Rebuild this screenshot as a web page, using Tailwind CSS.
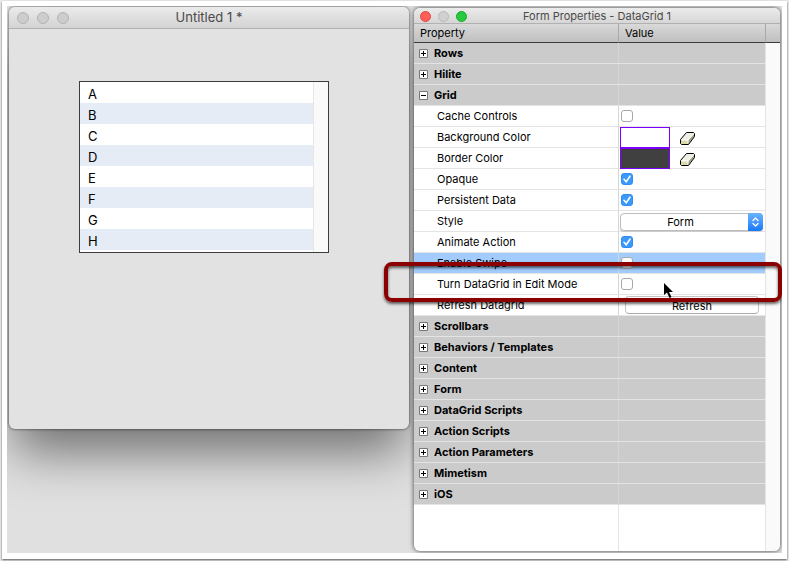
<!DOCTYPE html>
<html lang="en">
<head>
    <meta charset="utf-8">
    <title>Form Properties - DataGrid 1</title>
    <script src="https://cdn.jsdelivr.net/npm/@tailwindcss/browser@4"></script>
</head>
<body class="bg-[#ececec] px-0.5 pt-px pb-0.5 font-['Inter','Liberation_Sans',sans-serif] text-black">
    <div class="bg-white p-[5px] pb-1.5 shadow-[0_1px_2px_#555]">
        <div class="grid grid-cols-[400fr_366fr] items-start gap-[5px] overflow-hidden bg-[#e0e0e0] px-0.5 pt-px pb-0.5">

            <!-- form window -->
            <section class="rounded-md bg-[#e2e2e2] shadow-[0_28px_50px_-5px_rgba(0,0,0,0.5),0_0_3px_rgba(0,0,0,0.7)]">
                <header class="grid h-[22px] grid-cols-[1fr_auto_1fr] items-center rounded-t-md border-b border-[#b1b1b1] bg-linear-to-b from-[#ebebeb] to-[#d3d3d3] px-2">
                    <div class="flex gap-2">
                        <button aria-label="Close" class="size-3 rounded-full border border-[#b3b3b3] bg-[#cdcdcd]"></button>
                        <button aria-label="Minimize" class="size-3 rounded-full border border-[#b3b3b3] bg-[#cdcdcd]"></button>
                        <button aria-label="Zoom" class="size-3 rounded-full border border-[#b3b3b3] bg-[#cdcdcd]"></button>
                    </div>
                    <h1 class="text-[13px] text-[#4a4a4a]">Untitled 1 *</h1>
                </header>
                <div class="pt-[52px] pr-20 pb-44 pl-[70px]">
                    <div class="flex border border-[#3c3c3c] bg-white">
                        <ul class="flex-1 pb-0.5 text-[13px] leading-[21px] [&>li]:h-[21px] [&>li]:px-2 [&>li]:pt-0.5 [&>li:nth-child(even)]:bg-[#e5ecf6]">
                            <li>A</li>
                            <li>B</li>
                            <li>C</li>
                            <li>D</li>
                            <li>E</li>
                            <li>F</li>
                            <li>G</li>
                            <li>H</li>
                        </ul>
                        <div class="w-[15px] border-l border-[#e6e6e6] bg-[#fafafa]"></div>
                    </div>
                </div>
            </section>

            <!-- property inspector -->
            <section class="mt-px rounded-md bg-white shadow-[0_0_5px_rgba(0,0,0,0.7)]">
                <header class="grid h-4 grid-cols-[1fr_auto_1fr] items-center rounded-t-md border-b border-[#b1b1b1] bg-linear-to-b from-[#ebebeb] to-[#d6d6d6] px-1.5">
                    <div class="flex gap-[7px]">
                        <button aria-label="Close" class="size-[11px] rounded-full border border-[#e2463f] bg-[#ff5f57]"></button>
                        <button aria-label="Minimize" class="size-[11px] rounded-full border border-[#b9b9b9] bg-[#d0d0d0]"></button>
                        <button aria-label="Zoom" class="size-[11px] rounded-full border border-[#12ac28] bg-[#28c940]"></button>
                    </div>
                    <h2 class="text-[11px] text-[#4a4a4a]">Form Properties - DataGrid 1</h2>
                </header>
                <table class="w-full table-fixed border-separate border-spacing-0 text-left text-[11px] leading-5 [&_tbody_td]:border-r [&_tbody_td]:border-b [&_tbody_td]:border-[#e4e4e4] [&_tbody_td]:p-0 [&_tbody_th]:border-r [&_tbody_th]:border-b [&_tbody_th]:border-[#e4e4e4] [&_tbody_th]:border-r-[#d6d6d6] [&_tbody_th]:p-0 [&_tbody_th]:font-normal">
                    <colgroup>
                        <col class="w-[56%]">
                        <col>
                        <col class="w-3.5">
                    </colgroup>
                    <thead>
                        <tr class="bg-linear-to-b from-[#d9d9d9] to-[#bebebe] leading-[18px]">
                            <th scope="col" class="border-r border-b border-r-[#a8a8a8] border-b-[#3c3c3c] p-0 pl-1.5 font-normal">Property</th>
                            <th scope="col" class="border-r border-b border-r-[#a8a8a8] border-b-[#3c3c3c] p-0 pl-1.5 font-normal">Value</th>
                            <td class="border-b border-[#3c3c3c] p-0"></td>
                        </tr>
                    </thead>
                    <tbody>
                        <tr class="bg-[#cbcbcb]">
                            <th scope="row"><button class="flex h-5 items-center gap-1.5 pl-[5px] font-bold"><svg class="size-[9px]" viewBox="0 0 9 9"><path d="M.5 .5h8v8h-8z" fill="#fff" stroke="#777"/><path d="M2 4.500h5M4.500 2v5" stroke="#000"/></svg>Rows</button></th>
                            <td></td>
                            <td rowspan="23" class="rounded-br-md border-0! bg-[#fafafa]"></td>
                        </tr>
                        <tr class="bg-[#cbcbcb]">
                            <th scope="row"><button class="flex h-5 items-center gap-1.5 pl-[5px] font-bold"><svg class="size-[9px]" viewBox="0 0 9 9"><path d="M.5 .5h8v8h-8z" fill="#fff" stroke="#777"/><path d="M2 4.500h5M4.500 2v5" stroke="#000"/></svg>Hilite</button></th>
                            <td></td>
                        </tr>
                        <tr class="bg-[#cbcbcb]">
                            <th scope="row"><button class="flex h-5 items-center gap-1.5 pl-[5px] font-bold"><svg class="size-[9px]" viewBox="0 0 9 9"><path d="M.5 .5h8v8h-8z" fill="#fff" stroke="#777"/><path d="M2 4.500h5" stroke="#000"/></svg>Grid</button></th>
                            <td></td>
                        </tr>
                        <tr>
                            <th scope="row"><label for="cache" class="block pl-[23px]">Cache Controls</label></th>
                            <td><div class="flex h-5 items-center pl-0.5"><input id="cache" type="checkbox" class="size-3 appearance-none rounded-[3px] border border-[#a9a9a9] bg-white"></div></td>
                        </tr>
                        <tr>
                            <th scope="row"><label for="bgcolor" class="block pl-[23px]">Background Color</label></th>
                            <td>
                                <div class="flex h-5 items-start gap-[9px] pl-px">
                                    <input id="bgcolor" type="color" value="#ffffff" class="h-[21px] w-[50px] appearance-none border border-[#7d00ff] [&::-webkit-color-swatch]:border-0 [&::-webkit-color-swatch-wrapper]:p-0">
                                    <button aria-label="Clear background color" class="mt-1">
                                        <svg class="h-[15px] w-4" viewBox="0 0 16 15"><path d="M1.500 8.500 7.500 1.500h7l1 1v3L9.500 13.500h-7l-1-1z" fill="#efefe6"/><path d="M2 9h7v4H2z" fill="#d9d9a9"/><path d="M9 9l6-6v2.500L9.500 13H9z" fill="#a3a38c"/><path d="M2.500 9h6.500v3.500M9 9l5.500-6" fill="none" stroke="#fff"/><path d="M1.500 8.500 7.500 1.500h7l1 1v3L9.500 13.500h-7l-1-1z" fill="none" stroke="#000" stroke-linejoin="round"/></svg>
                                    </button>
                                </div>
                            </td>
                        </tr>
                        <tr>
                            <th scope="row"><label for="bordercolor" class="block pl-[23px]">Border Color</label></th>
                            <td>
                                <div class="flex h-5 items-start gap-[9px] pl-px">
                                    <input id="bordercolor" type="color" value="#404040" class="h-[21px] w-[50px] appearance-none border border-[#7d00ff] [&::-webkit-color-swatch]:border-0 [&::-webkit-color-swatch-wrapper]:p-0">
                                    <button aria-label="Clear border color" class="mt-1">
                                        <svg class="h-[15px] w-4" viewBox="0 0 16 15"><path d="M1.500 8.500 7.500 1.500h7l1 1v3L9.500 13.500h-7l-1-1z" fill="#efefe6"/><path d="M2 9h7v4H2z" fill="#d9d9a9"/><path d="M9 9l6-6v2.500L9.500 13H9z" fill="#a3a38c"/><path d="M2.500 9h6.500v3.500M9 9l5.500-6" fill="none" stroke="#fff"/><path d="M1.500 8.500 7.500 1.500h7l1 1v3L9.500 13.500h-7l-1-1z" fill="none" stroke="#000" stroke-linejoin="round"/></svg>
                                    </button>
                                </div>
                            </td>
                        </tr>
                        <tr>
                            <th scope="row"><label for="opaque" class="block pl-[23px]">Opaque</label></th>
                            <td>
                                <div class="grid h-5 items-center pl-0.5">
                                    <input id="opaque" type="checkbox" checked class="peer col-start-1 row-start-1 size-3 appearance-none rounded-[3px] border border-[#a9a9a9] bg-white checked:border-[#2f8df5] checked:bg-[#3b99fc]">
                                    <svg class="pointer-events-none invisible col-start-1 row-start-1 size-3 peer-checked:visible" viewBox="0 0 12 12"><path d="M3 6.300 5.200 8.700 9 3.200" fill="none" stroke="#fff" stroke-width="1.600" stroke-linecap="round"/></svg>
                                </div>
                            </td>
                        </tr>
                        <tr>
                            <th scope="row"><label for="persistent" class="block pl-[23px]">Persistent Data</label></th>
                            <td>
                                <div class="grid h-5 items-center pl-0.5">
                                    <input id="persistent" type="checkbox" checked class="peer col-start-1 row-start-1 size-3 appearance-none rounded-[3px] border border-[#a9a9a9] bg-white checked:border-[#2f8df5] checked:bg-[#3b99fc]">
                                    <svg class="pointer-events-none invisible col-start-1 row-start-1 size-3 peer-checked:visible" viewBox="0 0 12 12"><path d="M3 6.300 5.200 8.700 9 3.200" fill="none" stroke="#fff" stroke-width="1.600" stroke-linecap="round"/></svg>
                                </div>
                            </td>
                        </tr>
                        <tr>
                            <th scope="row"><label for="style" class="block pl-[23px]">Style</label></th>
                            <td>
                                <div class="grid h-5 items-end pr-0.5 pl-px">
                                    <select id="style" class="col-start-1 row-start-1 h-[18px] w-full appearance-none rounded border border-[#bdbdbd] bg-white pr-[22px] text-center leading-4 shadow-[0_1px_0_#ccc]">
                                        <option>Form</option>
                                        <option>Table</option>
                                    </select>
                                    <svg class="pointer-events-none col-start-1 row-start-1 h-[18px] w-[15px] justify-self-end rounded-r bg-linear-to-b from-[#6bb3fa] to-[#1478fb]" viewBox="0 0 15 18"><path d="M5 7.500 7.500 5 10 7.500M5 10.500 7.500 13 10 10.500" fill="none" stroke="#fff" stroke-width="1.300" stroke-linecap="round" stroke-linejoin="round"/></svg>
                                </div>
                            </td>
                        </tr>
                        <tr>
                            <th scope="row"><label for="animate" class="block pl-[23px]">Animate Action</label></th>
                            <td>
                                <div class="grid h-5 items-center pl-0.5">
                                    <input id="animate" type="checkbox" checked class="peer col-start-1 row-start-1 size-3 appearance-none rounded-[3px] border border-[#a9a9a9] bg-white checked:border-[#2f8df5] checked:bg-[#3b99fc]">
                                    <svg class="pointer-events-none invisible col-start-1 row-start-1 size-3 peer-checked:visible" viewBox="0 0 12 12"><path d="M3 6.300 5.200 8.700 9 3.200" fill="none" stroke="#fff" stroke-width="1.600" stroke-linecap="round"/></svg>
                                </div>
                            </td>
                        </tr>
                        <tr class="bg-[#a3ccfe]">
                            <th scope="row"><label for="swipe" class="block pl-[23px]">Enable Swipe</label></th>
                            <td><div class="flex h-5 items-center pl-0.5"><input id="swipe" type="checkbox" class="size-3 appearance-none rounded-[3px] border border-[#a9a9a9] bg-white"></div></td>
                        </tr>
                        <tr class="relative z-10">
                            <th scope="row"><label for="editmode" class="block pl-[23px]">Turn DataGrid in Edit Mode</label></th>
                            <td>
                                <div class="relative flex h-5 items-center pl-0.5">
                                    <input id="editmode" type="checkbox" class="size-3 appearance-none rounded-[3px] border border-[#a9a9a9] bg-white">
                                    <svg class="absolute top-2 left-11 h-[18px] w-3" viewBox="0 0 12 18"><path d="M1 1v12l3-2.500 2.500 5.500 2-1-2.500-5h4z" fill="#000"/></svg>
                                </div>
                                <div class="pointer-events-none absolute -top-3 -right-0.5 -bottom-[7px] -left-[30px] rounded-lg border-4 border-[#8b0000] shadow-[0_2px_3px_rgba(0,0,0,0.6),inset_0_2px_3px_rgba(0,0,0,0.6)]"></div>
                            </td>
                        </tr>
                        <tr>
                            <th scope="row"><span class="block pl-[23px]">Refresh Datagrid</span></th>
                            <td><div class="flex h-5 items-end pr-1.5 pb-px pl-1.5"><button class="h-[18px] w-full rounded border border-[#c4c4c4] border-b-[#aaa] bg-white leading-[18px]">Refresh</button></div></td>
                        </tr>
                        <tr class="bg-[#cbcbcb]">
                            <th scope="row"><button class="flex h-5 items-center gap-1.5 pl-[5px] font-bold"><svg class="size-[9px]" viewBox="0 0 9 9"><path d="M.5 .5h8v8h-8z" fill="#fff" stroke="#777"/><path d="M2 4.500h5M4.500 2v5" stroke="#000"/></svg>Scrollbars</button></th>
                            <td></td>
                        </tr>
                        <tr class="bg-[#cbcbcb]">
                            <th scope="row"><button class="flex h-5 items-center gap-1.5 pl-[5px] font-bold"><svg class="size-[9px]" viewBox="0 0 9 9"><path d="M.5 .5h8v8h-8z" fill="#fff" stroke="#777"/><path d="M2 4.500h5M4.500 2v5" stroke="#000"/></svg>Behaviors / Templates</button></th>
                            <td></td>
                        </tr>
                        <tr class="bg-[#cbcbcb]">
                            <th scope="row"><button class="flex h-5 items-center gap-1.5 pl-[5px] font-bold"><svg class="size-[9px]" viewBox="0 0 9 9"><path d="M.5 .5h8v8h-8z" fill="#fff" stroke="#777"/><path d="M2 4.500h5M4.500 2v5" stroke="#000"/></svg>Content</button></th>
                            <td></td>
                        </tr>
                        <tr class="bg-[#cbcbcb]">
                            <th scope="row"><button class="flex h-5 items-center gap-1.5 pl-[5px] font-bold"><svg class="size-[9px]" viewBox="0 0 9 9"><path d="M.5 .5h8v8h-8z" fill="#fff" stroke="#777"/><path d="M2 4.500h5M4.500 2v5" stroke="#000"/></svg>Form</button></th>
                            <td></td>
                        </tr>
                        <tr class="bg-[#cbcbcb]">
                            <th scope="row"><button class="flex h-5 items-center gap-1.5 pl-[5px] font-bold"><svg class="size-[9px]" viewBox="0 0 9 9"><path d="M.5 .5h8v8h-8z" fill="#fff" stroke="#777"/><path d="M2 4.500h5M4.500 2v5" stroke="#000"/></svg>DataGrid Scripts</button></th>
                            <td></td>
                        </tr>
                        <tr class="bg-[#cbcbcb]">
                            <th scope="row"><button class="flex h-5 items-center gap-1.5 pl-[5px] font-bold"><svg class="size-[9px]" viewBox="0 0 9 9"><path d="M.5 .5h8v8h-8z" fill="#fff" stroke="#777"/><path d="M2 4.500h5M4.500 2v5" stroke="#000"/></svg>Action Scripts</button></th>
                            <td></td>
                        </tr>
                        <tr class="bg-[#cbcbcb]">
                            <th scope="row"><button class="flex h-5 items-center gap-1.5 pl-[5px] font-bold"><svg class="size-[9px]" viewBox="0 0 9 9"><path d="M.5 .5h8v8h-8z" fill="#fff" stroke="#777"/><path d="M2 4.500h5M4.500 2v5" stroke="#000"/></svg>Action Parameters</button></th>
                            <td></td>
                        </tr>
                        <tr class="bg-[#cbcbcb]">
                            <th scope="row"><button class="flex h-5 items-center gap-1.5 pl-[5px] font-bold"><svg class="size-[9px]" viewBox="0 0 9 9"><path d="M.5 .5h8v8h-8z" fill="#fff" stroke="#777"/><path d="M2 4.500h5M4.500 2v5" stroke="#000"/></svg>Mimetism</button></th>
                            <td></td>
                        </tr>
                        <tr class="bg-[#cbcbcb]">
                            <th scope="row"><button class="flex h-5 items-center gap-1.5 pl-[5px] font-bold"><svg class="size-[9px]" viewBox="0 0 9 9"><path d="M.5 .5h8v8h-8z" fill="#fff" stroke="#777"/><path d="M2 4.500h5M4.500 2v5" stroke="#000"/></svg>iOS</button></th>
                            <td></td>
                        </tr>
                        <tr class="h-[46px]">
                            <td class="border-b-0!"></td>
                            <td class="border-b-0!"></td>
                        </tr>
                    </tbody>
                </table>
            </section>
        </div>
    </div>
</body>
</html>
